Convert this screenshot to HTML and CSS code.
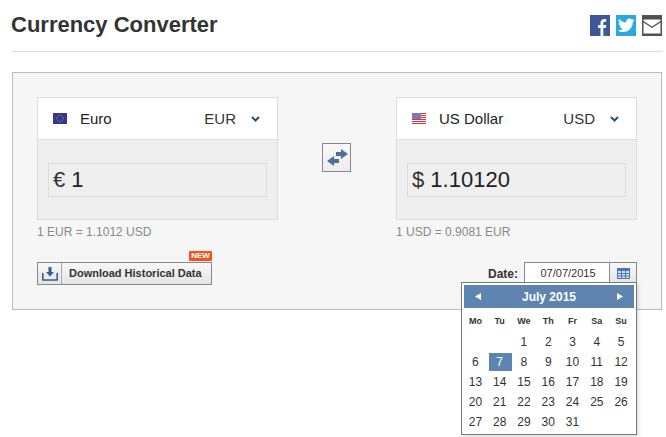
FILE: index.html
```html
<!DOCTYPE html>
<html lang="en">
<head>
<meta charset="utf-8">
<title>Currency Converter</title>
<link rel="stylesheet" href="styles.css">
</head>
<body>
<div class="page">
  <header class="top">
    <h1 class="title">Currency Converter</h1>
    <div class="social">
      <svg class="soc" width="20" height="21" viewBox="0 0 20 21"><rect width="20" height="21" fill="#3b5998"/><path d="M10.500 21v-8H8v-3h2.500V8c0-2.600 1.600-4 3.900-4 .9 0 1.600.1 1.800.1v2.700h-1.400c-1.200 0-1.500.6-1.500 1.500V10h3l-.4 3h-2.600v8z" fill="#fff"/></svg>
      <svg class="soc" width="20" height="21" viewBox="0 0 20 21"><rect width="20" height="21" fill="#2aa9e0"/><path d="M18.500 5c-.6.3-1.300.5-2 .6.700-.4 1.300-1.100 1.500-1.900-.7.4-1.400.7-2.100.8-.6-.7-1.500-1.100-2.400-1.100-1.900 0-3.400 1.500-3.400 3.400 0 .3 0 .5.1.8C7.400 7.400 4.900 6.100 3.200 4c-.3.500-.5 1.100-.5 1.700 0 1.200.6 2.200 1.500 2.800-.5 0-1-.2-1.500-.4 0 1.700 1.200 3 2.700 3.300-.5.100-1 .2-1.500.1.400 1.400 1.700 2.300 3.100 2.300C5.800 15 3.800 15.600 1.800 15.400 3.300 16.400 5.100 17 7 17c6.300 0 9.800-5.200 9.800-9.800v-.4c.7-.5 1.300-1.100 1.700-1.800z" fill="#fff"/></svg>
      <svg class="soc" width="20" height="21" viewBox="0 0 20 21"><rect width="20" height="21" fill="#525252"/><path d="M1.500 4.500h17V6L10 11.500 1.500 6z" fill="#fff"/><path d="M1.500 7.500L10 13l8.500-5.500v11h-17z" fill="#fff"/></svg>
    </div>
  </header>

  <main class="panel">
    <div class="converter">
      <section class="side">
        <div class="card">
          <div class="card-head">
            <svg class="flag" width="14" height="11" viewBox="0 0 14 11"><rect width="14" height="11" fill="#34388c"/><circle cx="7" cy="5.500" r="3.200" fill="none" stroke="#8b8a80" stroke-width="1" stroke-dasharray="1 .8"/></svg>
            <span class="cur-name">Euro</span>
            <span class="cur-code">EUR</span>
            <svg class="chev" width="9" height="6" viewBox="0 0 9 6"><path d="M1 1l3.500 3.500L8 1" fill="none" stroke="#23527c" stroke-width="2"/></svg>
          </div>
          <div class="card-body">
            <div class="amount"><span class="sym">€</span> 1</div>
          </div>
        </div>
        <p class="rate">1 EUR = 1.1012 USD</p>
      </section>

      <button class="swap" type="button" aria-label="Swap">
        <svg width="22" height="18" viewBox="0 0 22 18"><path d="M15 0l7 5-7 5V7h-5V3h5z" fill="#4a7199"/><path d="M8 7l-7 5 7 5v-3h5v-4H8z" fill="#4a7199"/></svg>
      </button>

      <section class="side">
        <div class="card">
          <div class="card-head">
            <svg class="flag" width="14" height="11" viewBox="0 0 14 11"><rect width="14" height="11" fill="#fff"/><path d="M0 .5h14M0 2.500h14M0 4.500h14M0 6.500h14M0 8.500h14M0 10.500h14" stroke="#e0303f" stroke-width="1"/><rect width="9" height="6" fill="#7a7ab5"/></svg>
            <span class="cur-name">US Dollar</span>
            <span class="cur-code">USD</span>
            <svg class="chev" width="9" height="6" viewBox="0 0 9 6"><path d="M1 1l3.500 3.500L8 1" fill="none" stroke="#23527c" stroke-width="2"/></svg>
          </div>
          <div class="card-body">
            <div class="amount"><span class="sym">$</span> 1.10120</div>
          </div>
        </div>
        <p class="rate">1 USD = 0.9081 EUR</p>
      </section>
    </div>

    <div class="actions">
      <button class="download" type="button">
        <span class="dl-icon">
          <svg width="16" height="14" viewBox="0 0 16 14"><path d="M.8 6v7h14.400V6" fill="none" stroke="#2f6193" stroke-width="1.600"/><path d="M6.500 0h3v5H12L8 9.500 4 5h2.500z" fill="#2f6193"/></svg>
        </span>
        <span class="dl-text">Download Historical Data</span>
        <span class="badge">NEW</span>
      </button>
      <div class="date">
        <span class="date-label">Date:</span>
        <span class="date-field">
          <span class="date-value">07/07/2015</span>
          <span class="date-btn">
            <svg width="13" height="11" viewBox="0 0 13 11"><rect width="13" height="11" fill="#4a78ad"/><path d="M1 3h3v2H1zM5 3h3v2H5zM9 3h3v2H9zM1 6h3v1.500H1zM5 6h3v1.500H5zM9 6h3v1.500H9zM1 8.500h3V10H1zM5 8.500h3V10H5zM9 8.500h3V10H9z" fill="#d7e2f0"/></svg>
          </span>
        </span>
      </div>
      <div class="calendar">
        <div class="cal-head">
          <svg class="cal-arrow" width="6" height="7" viewBox="0 0 6 7"><path d="M6 0v7L0 3.500z" fill="#fff"/></svg>
          <span class="cal-month">July 2015</span>
          <svg class="cal-arrow" width="6" height="7" viewBox="0 0 6 7"><path d="M0 0v7l6-3.500z" fill="#fff"/></svg>
        </div>
        <div class="cal-grid cal-days">
          <span>Mo</span><span>Tu</span><span>We</span><span>Th</span><span>Fr</span><span>Sa</span><span>Su</span>
        </div>
        <div class="cal-grid cal-dates">
          <span></span><span></span><span>1</span><span>2</span><span>3</span><span>4</span><span>5</span>
          <span>6</span><span class="sel">7</span><span>8</span><span>9</span><span>10</span><span>11</span><span>12</span>
          <span>13</span><span>14</span><span>15</span><span>16</span><span>17</span><span>18</span><span>19</span>
          <span>20</span><span>21</span><span>22</span><span>23</span><span>24</span><span>25</span><span>26</span>
          <span>27</span><span>28</span><span>29</span><span>30</span><span>31</span><span></span><span></span>
        </div>
      </div>
    </div>
  </main>
</div>
</body>
</html>
```
FILE: styles.css
```css
* { box-sizing: border-box; }
html, body { margin: 0; padding: 0; background: #fff; }
body { font-family: "Liberation Sans", Arial, sans-serif; color: #333; overflow: hidden; height: 437px; }
.page { width: 666px; padding: 0 4px 0 12px; }
.top { height: 52px; display: flex; align-items: flex-start; justify-content: space-between; border-bottom: 1px solid #ddd; }
.title { margin: 12px 0 0 -1px; font-size: 22px; line-height: 26px; font-weight: bold; color: #333; }
.social { display: flex; gap: 6px; padding-top: 15px; }
.soc { display: block; }
.panel { margin-top: 20px; height: 238px; background: #f6f6f6; border: 1px solid #bbb; padding: 24px 24px 0; }
.converter { display: flex; justify-content: space-between; align-items: flex-start; }
.side { width: 241px; }
.card { border: 1px solid #ddd; background: #efefef; height: 123px; }
.card-head { height: 42px; background: #fff; border-bottom: 1px solid #ddd; display: flex; align-items: center; padding: 0 17px 0 15px; font-size: 15px; }
.flag { display: block; flex: none; }
.cur-name { margin-left: 13px; color: #222; flex: 1; }
.cur-code { color: #333; margin-right: 15px; }
.chev { display: block; flex: none; }
.card-body { padding: 23px 10px 0; }
.amount { height: 34px; border: 1px solid #ddd; padding-left: 4px; font-size: 22px; line-height: 32px; color: #222; }
.sym { color: #333; }
.rate { margin: 5px 0 0; font-size: 12px; line-height: 14px; color: #888; }
.swap { margin: 46px 1px 0 0; width: 29px; height: 29px; padding: 0; border: 1px solid #888; background: linear-gradient(#f9f9f9, #ececec); display: flex; align-items: center; justify-content: center; }
.actions { position: relative; display: flex; justify-content: space-between; align-items: flex-start; margin-top: 23px; }
.download { position: relative; display: flex; align-items: stretch; width: 175px; height: 23px; padding: 0; border: 1px solid #888; background: linear-gradient(#f8f8f8, #e4e4e4); font-family: inherit; font-size: 11px; font-weight: bold; color: #333; }
.dl-icon { width: 24px; border-right: 1px solid #aaa; display: flex; align-items: center; justify-content: center; }
.dl-text { padding-left: 7px; line-height: 21px; white-space: nowrap; }
.badge { position: absolute; right: -1px; top: -12px; width: 23px; height: 10px; background: #f4511e; border-radius: 1px; color: #fff; font-size: 8px; line-height: 10px; text-align: center; }
.date { display: flex; align-items: center; }
.date-label { font-size: 12px; font-weight: bold; margin-right: 6px; }
.date-field { display: flex; width: 113px; height: 23px; border: 1px solid #888; background: #fff; }
.date-value { flex: 1; padding-left: 2px; text-align: center; font-size: 11px; line-height: 20px; }
.date-btn { width: 27px; border-left: 1px solid #888; background: linear-gradient(#f8f8f8, #e4e4e4); display: flex; align-items: center; justify-content: center; }
.calendar { position: absolute; right: 0; top: 20px; width: 176px; height: 153px; background: #fff; border: 1px solid #777; padding: 2px; box-shadow: 2px 2px 3px rgba(0,0,0,.12); }
.cal-head { height: 23px; background: #5e84b0; color: #fff; display: flex; align-items: center; justify-content: space-between; padding: 0 11px; }
.cal-month { font-size: 12px; font-weight: bold; }
.cal-arrow { display: block; flex: none; }
.cal-grid { display: grid; grid-template-columns: repeat(7, 1fr); width: 170px; text-align: center; }
.cal-grid span { padding-right: 1.5px; }
.cal-days { height: 24px; padding-top: 2px; font-size: 9px; font-weight: bold; line-height: 22px; color: #333; }
.cal-dates { font-size: 12px; line-height: 20px; grid-auto-rows: 20px; }
.cal-dates span { display: block; }
.cal-dates .sel { background: #5e84b0; color: #fff; margin: 1px; line-height: 18px; }
```
